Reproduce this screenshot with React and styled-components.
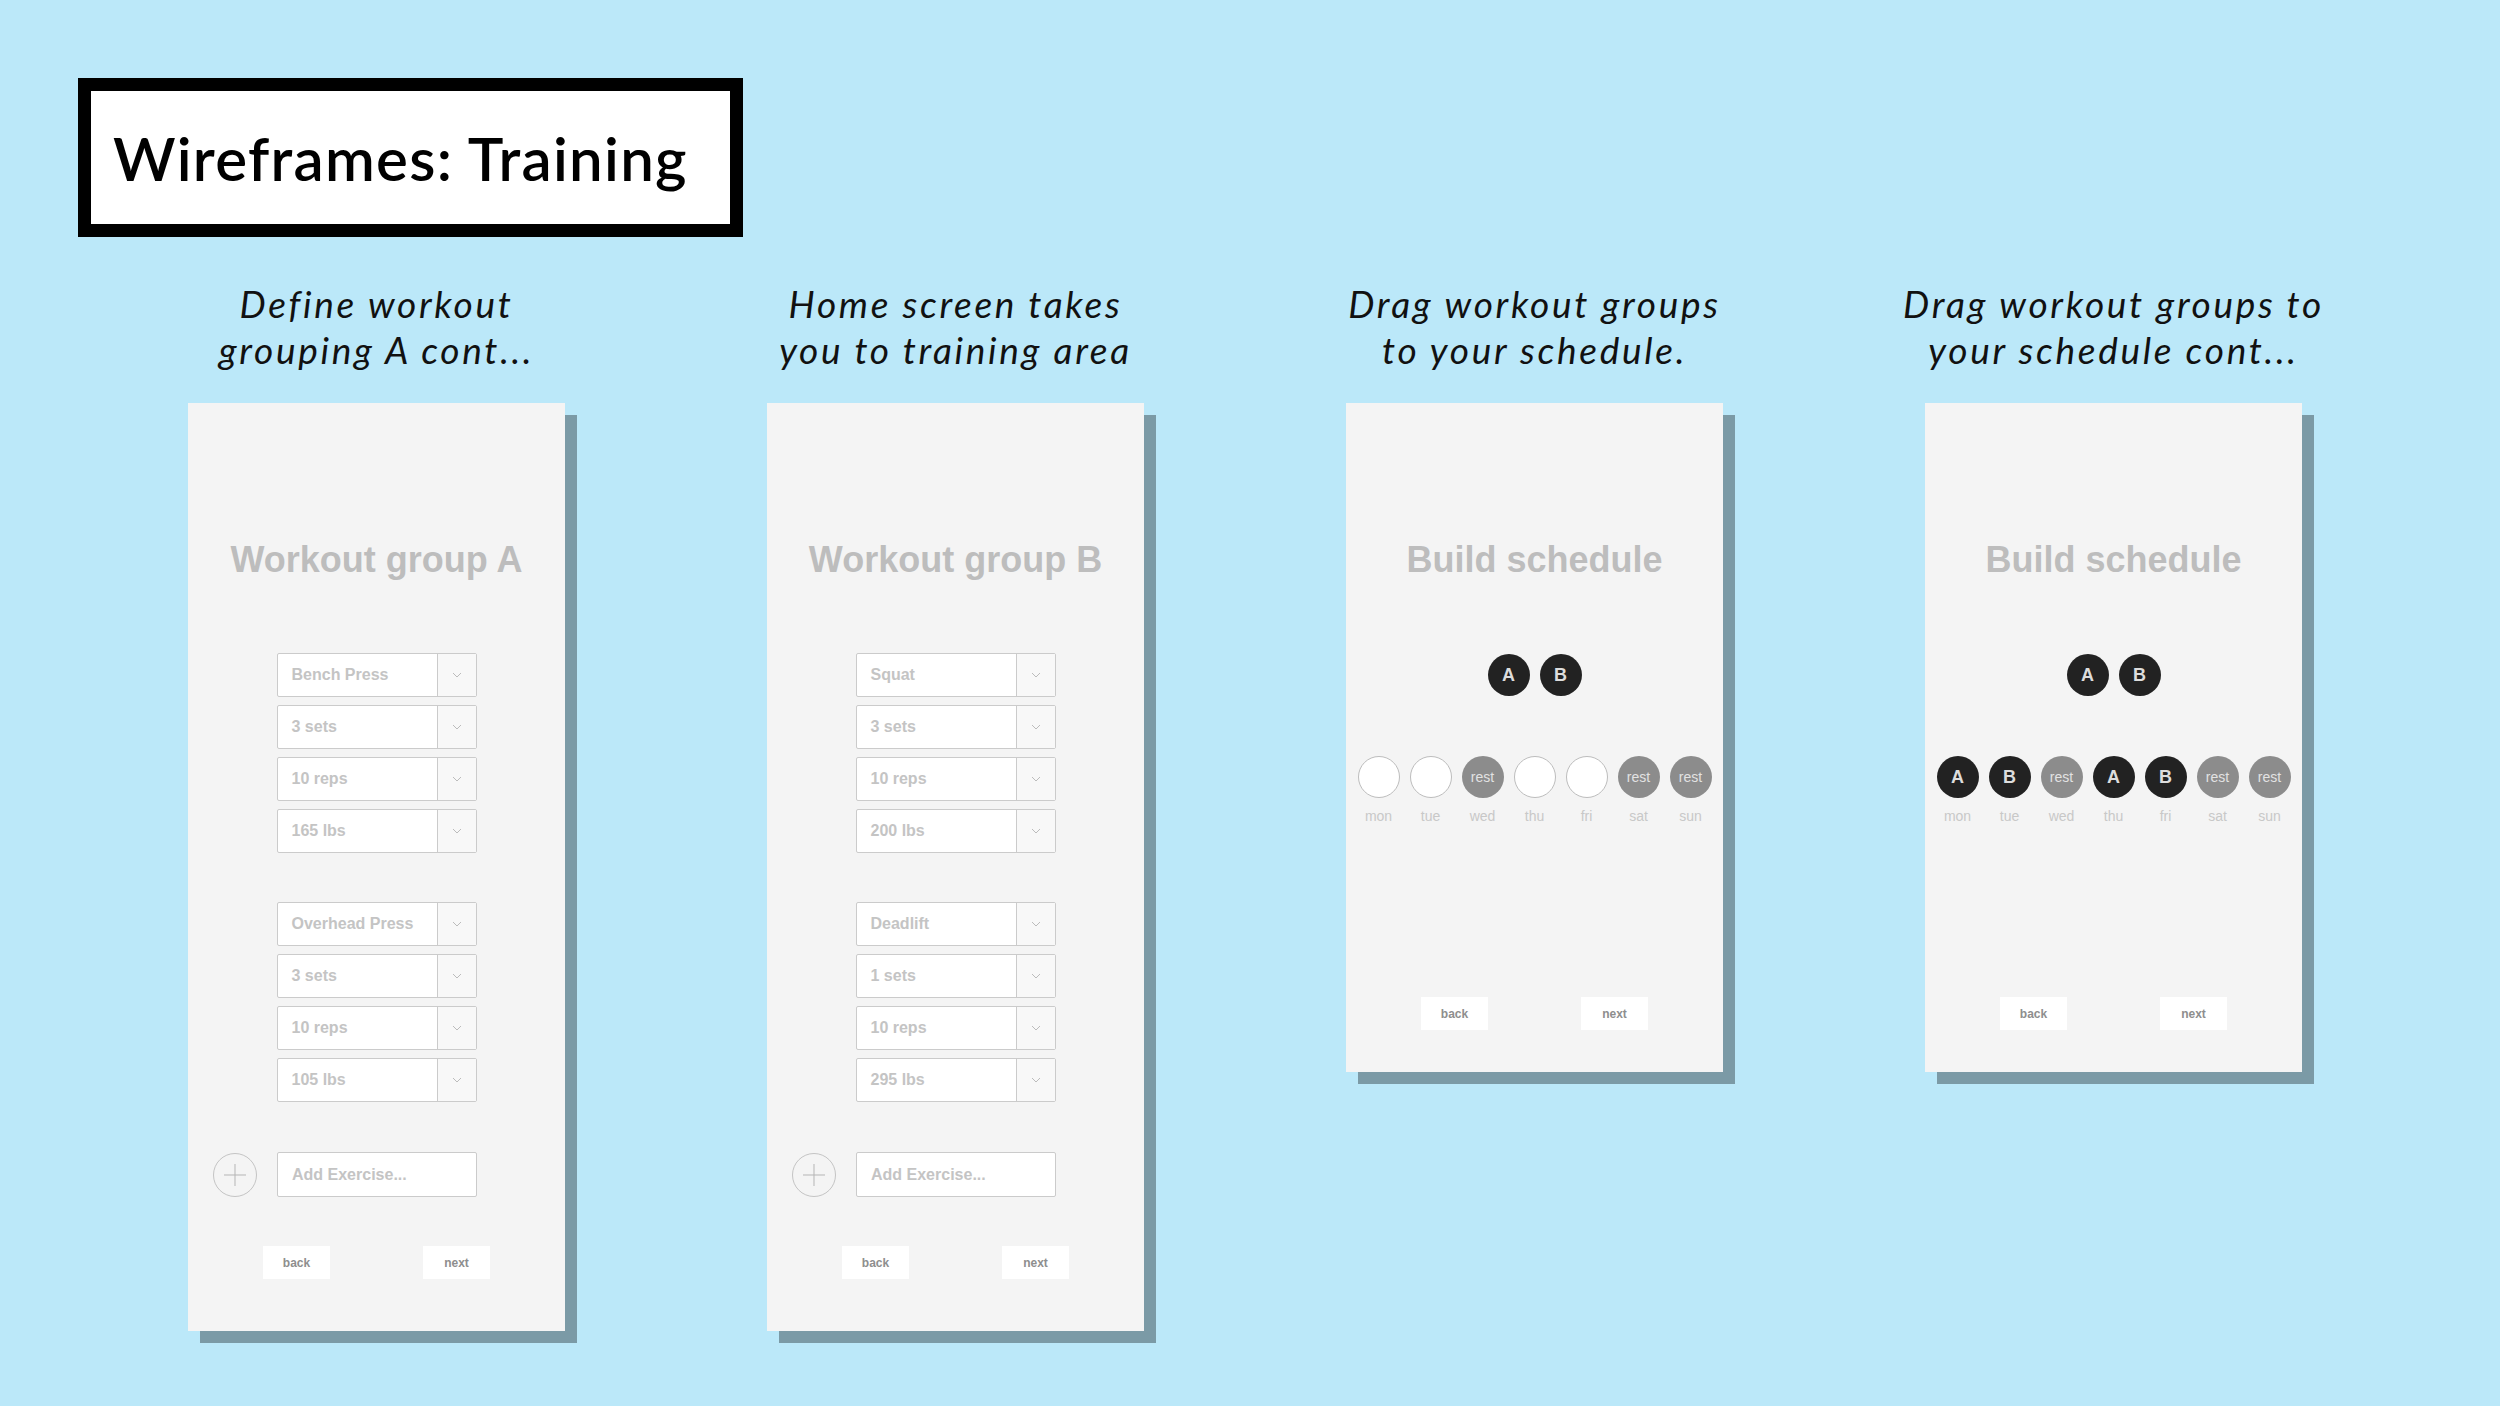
import React from "react";
import styled, { createGlobalStyle } from "styled-components";

const GlobalStyle = createGlobalStyle`
  html, body {
    margin: 0;
    padding: 0;
  }
  body {
    background: #bbe8f9;
  }
`;

const groupA = [
  ["Bench Press", "3 sets", "10 reps", "165 lbs"],
  ["Overhead Press", "3 sets", "10 reps", "105 lbs"],
];

const groupB = [
  ["Squat", "3 sets", "10 reps", "200 lbs"],
  ["Deadlift", "1 sets", "10 reps", "295 lbs"],
];

const days = ["mon", "tue", "wed", "thu", "fri", "sat", "sun"];
const emptyWeek = [null, null, "rest", null, null, "rest", "rest"];
const filledWeek = ["A", "B", "rest", "A", "B", "rest", "rest"];

function Chevron() {
  return (
    <svg width="10" height="6" viewBox="0 0 10 6">
      <path d="M1 1 L5 5 L9 1" fill="none" stroke="#bcbcbc" strokeWidth="1" />
    </svg>
  );
}

function PlusIcon() {
  return (
    <svg width="24" height="24" viewBox="0 0 24 24">
      <path d="M12 1 V23 M1 12 H23" stroke="#b5b5b5" strokeWidth="1" />
    </svg>
  );
}

function WorkoutScreen({ title, groups }) {
  return (
    <Card $bottom={52}>
      <ScreenTitle>{title}</ScreenTitle>
      <Form>
        {groups.map((group, i) => (
          <FieldGroup key={i}>
            {group.map((value) => (
              <Select key={value}>
                <SelectLabel>{value}</SelectLabel>
                <SelectToggle>
                  <Chevron />
                </SelectToggle>
              </Select>
            ))}
          </FieldGroup>
        ))}
      </Form>
      <AddRow>
        <AddButton>
          <PlusIcon />
        </AddButton>
        <AddInput>Add Exercise...</AddInput>
      </AddRow>
      <Footer $top={49}>
        <NavButton>back</NavButton>
        <NavButton>next</NavButton>
      </Footer>
    </Card>
  );
}

function ScheduleScreen({ week }) {
  return (
    <Card $bottom={42}>
      <ScreenTitle>Build schedule</ScreenTitle>
      <Chips>
        <Chip $kind="group">A</Chip>
        <Chip $kind="group">B</Chip>
      </Chips>
      <Week>
        {days.map((day, i) => {
          const slot = week[i];
          const kind = slot === "rest" ? "rest" : slot ? "group" : "empty";
          return (
            <Day key={day}>
              <Chip $kind={kind}>{slot}</Chip>
              <DayLabel>{day}</DayLabel>
            </Day>
          );
        })}
      </Week>
      <Footer $top={173}>
        <NavButton>back</NavButton>
        <NavButton>next</NavButton>
      </Footer>
    </Card>
  );
}

export default function App() {
  return (
    <Page>
      <GlobalStyle />
      <HeaderBox>
        <HeaderTitle>Wireframes: Training</HeaderTitle>
      </HeaderBox>
      <Board>
        <Column>
          <Caption>
            <CaptionText>
              Define workout
              <br />
              grouping A cont...
            </CaptionText>
          </Caption>
          <WorkoutScreen title="Workout group A" groups={groupA} />
        </Column>
        <Column>
          <Caption>
            <CaptionText>
              Home screen takes
              <br />
              you to training area
            </CaptionText>
          </Caption>
          <WorkoutScreen title="Workout group B" groups={groupB} />
        </Column>
        <Column>
          <Caption>
            <CaptionText>
              Drag workout groups
              <br />
              to your schedule.
            </CaptionText>
          </Caption>
          <ScheduleScreen week={emptyWeek} />
        </Column>
        <Column>
          <Caption>
            <CaptionText>
              Drag workout groups to
              <br />
              your schedule cont...
            </CaptionText>
          </Caption>
          <ScheduleScreen week={filledWeek} />
        </Column>
      </Board>
    </Page>
  );
}

const Page = styled.div`
  width: 2500px;
  height: 1406px;
  box-sizing: border-box;
  padding-top: 78px;
  background: #bbe8f9;
  overflow: hidden;
`;

const HeaderBox = styled.div`
  margin-left: 78px;
  width: 665px;
  height: 159px;
  box-sizing: border-box;
  border: 13px solid #000;
  background: #fff;
  display: flex;
  align-items: center;
  padding-left: 22px;
`;

const HeaderTitle = styled.h1`
  margin: 0;
  font-family: Lato, "Liberation Sans", sans-serif;
  font-weight: 600;
  font-size: 60px;
  line-height: 1;
  color: #000;
  letter-spacing: 1.3px;
`;

const Board = styled.div`
  display: grid;
  grid-template-columns: repeat(4, 377px);
  column-gap: 202px;
  margin: 44px 0 0 188px;
  align-items: start;
`;

const Column = styled.div`
  display: flex;
  flex-direction: column;
`;

const Caption = styled.div`
  display: flex;
  justify-content: center;
  height: 92px;
  margin-bottom: 30px;
`;

const CaptionText = styled.p`
  margin: 0;
  flex: none;
  white-space: nowrap;
  text-align: center;
  font-family: Lato, "Liberation Sans", sans-serif;
  font-style: italic;
  font-size: 37px;
  line-height: 46px;
  letter-spacing: 2.7px;
  color: #111;
`;

const Card = styled.div`
  display: flex;
  flex-direction: column;
  align-items: center;
  background: #f4f4f4;
  padding: 137px 0 ${({ $bottom }) => $bottom}px;
  box-shadow: 12px 12px 0 #7b9aa6;
  font-family: "Liberation Sans", Arial, sans-serif;
`;

const ScreenTitle = styled.h2`
  margin: 0;
  font-size: 36px;
  line-height: 40px;
  font-weight: 700;
  color: #bdbdbd;
`;

const Form = styled.div`
  display: flex;
  flex-direction: column;
  gap: 49px;
  margin-top: 73px;
`;

const FieldGroup = styled.div`
  display: flex;
  flex-direction: column;
  gap: 8px;
`;

const Select = styled.div`
  display: flex;
  width: 200px;
  height: 44px;
  box-sizing: border-box;
  border: 1px solid #cbcbcb;
  border-radius: 2px;
  background: #fff;
`;

const SelectLabel = styled.div`
  flex: 1;
  display: flex;
  align-items: center;
  padding-left: 14px;
  font-size: 16px;
  font-weight: 700;
  color: #c4c4c4;
`;

const SelectToggle = styled.div`
  width: 38px;
  display: flex;
  align-items: center;
  justify-content: center;
  border-left: 1px solid #cbcbcb;
  background: #f8f8f8;
`;

const AddRow = styled.div`
  align-self: stretch;
  display: flex;
  align-items: center;
  gap: 20px;
  padding-left: 25px;
  margin-top: 50px;
`;

const AddButton = styled.div`
  width: 44px;
  height: 44px;
  box-sizing: border-box;
  border: 1px solid #c4c4c4;
  border-radius: 50%;
  display: flex;
  align-items: center;
  justify-content: center;
`;

const AddInput = styled(SelectLabel)`
  flex: none;
  width: 200px;
  height: 45px;
  box-sizing: border-box;
  border: 1px solid #cbcbcb;
  border-radius: 2px;
  background: #fff;
`;

const Footer = styled.div`
  display: flex;
  justify-content: center;
  gap: 93px;
  margin-top: ${({ $top }) => $top}px;
`;

const NavButton = styled.div`
  width: 67px;
  height: 33px;
  display: flex;
  align-items: center;
  justify-content: center;
  background: #fff;
  font-size: 12px;
  font-weight: 700;
  color: #8e8e8e;
`;

const Chips = styled.div`
  display: flex;
  gap: 10px;
  margin-top: 74px;
`;

const chipColors = {
  group: "background: #222; color: #ddd; font-weight: 700; font-size: 18px;",
  rest: "background: #8c8c8c; color: #e2e2e2; font-size: 14px;",
  empty: "background: #fff; border: 1px solid #bdbdbd;",
};

const Chip = styled.div`
  width: 42px;
  height: 42px;
  box-sizing: border-box;
  border-radius: 50%;
  display: flex;
  align-items: center;
  justify-content: center;
  ${({ $kind }) => chipColors[$kind]}
`;

const Week = styled.div`
  display: flex;
  gap: 10px;
  margin-top: 60px;
`;

const Day = styled.div`
  display: flex;
  flex-direction: column;
  align-items: center;
  gap: 10px;
`;

const DayLabel = styled.div`
  font-size: 14px;
  line-height: 16px;
  color: #c8c8c8;
`;
